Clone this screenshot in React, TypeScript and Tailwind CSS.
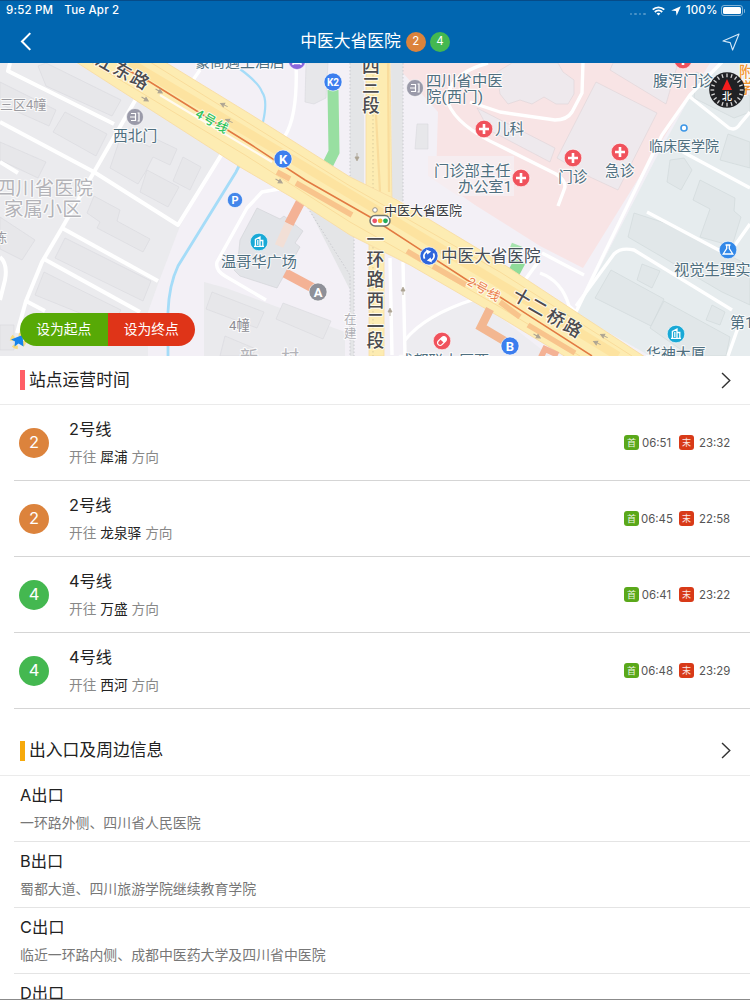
import type { ReactNode } from "react";

type LineTime = { line: number; to: string; first: string; last: string };

const LINE_TIMES: LineTime[] = [
  { line: 2, to: "犀浦", first: "06:51", last: "23:32" },
  { line: 2, to: "龙泉驿", first: "06:45", last: "22:58" },
  { line: 4, to: "万盛", first: "06:41", last: "23:22" },
  { line: 4, to: "西河", first: "06:48", last: "23:29" },
];

const EXITS = [
  { name: "A出口", info: "一环路外侧、四川省人民医院" },
  { name: "B出口", info: "蜀都大道、四川旅游学院继续教育学院" },
  { name: "C出口", info: "临近一环路内侧、成都中医药大学及四川省中医院" },
  { name: "D出口", info: "" },
];

const LINE_BG: Record<number, string> = {
  2: "bg-[#dc833c]",
  4: "bg-[#44b850]",
};

// ── Map data ────────────────────────────────────────────────────────────────

const BUILDINGS = [
  "38,66 46,63 121,100 112,116 46,86",
  "0,82 56,110 49,126 0,104",
  "65,112 107,134 96,156 53,132",
  "0,142 46,162 38,178 0,160",
  "122,133 150,147 156,139 177,149 170,165 153,157 146,171 138,184 110,168",
  "147,170 179,187 168,207 140,192",
  "183,157 201,167 190,190 173,181",
  "94,196 120,210 117,221 150,239 143,252 97,228 100,222 87,213",
  "0,217 35,240 22,260 0,249",
  "65,238 151,281 143,301 55,258",
  "44,272 121,310 112,326 35,295",
  "306,63 328,63 326,98 314,104 305,102",
  "417,124 428,124 428,149 415,149",
  "212,292 264,312 257,328 206,309",
  "225,336 256,349 252,356 220,356",
  "283,303 331,321 323,339 276,319",
  "0,325 14,325 14,350 0,350",
];

const PINK_BUILDINGS = [
  "497,72 512,63 558,63 563,72 574,80 574,94 568,104 556,104 544,97 532,104 520,100 508,104 500,94",
  "596,82 657,113 618,190 590,177 557,158",
  "613,63 678,63 666,104 610,70",
  "477,108 555,148 550,162 489,130",
];

const GREEN_BUILDINGS = [
  "696,72 750,96 750,112 734,118 694,98",
  "670,160 684,158 692,170 681,190 667,182",
  "700,180 735,198 734,211 741,217 732,246 700,237 710,209 693,200",
  "728,134 750,142 750,168 720,160",
  "634,213 665,223 750,266 750,305 722,292 628,237",
  "611,270 664,299 651,326 595,298",
  "642,264 660,271 652,288 637,280",
  "664,301 730,337 726,356 690,356 650,328",
  "712,305 725,312 720,325 706,320",
];

const WHITE_ROADS = [
  "M10 63 L8 71 L114 124",
  "M0 122 L94 172 L178 225 L223 152",
  "M136 99 L94 172 L62 228 L42 262 L26 301 L17 333",
  "M62 228 L158 281",
  "M44 259 L140 312",
  "M26 301 L45 311",
  "M0 162 L18 173",
  "M0 257 Q8 264 5 280 L0 300",
];

const THIN_ROADS = [
  "M296 63 Q298 115 285 136",
  "M200 70 L193 80",
  "M290 187 L262 192 L247 208 L217 262 Q215 270 225 276 L266 300",
  "M488 63 Q445 75 448 103 Q457 126 500 146 L556 174 Q568 182 564 190 L558 206",
  "M470 102 L500 112 L555 120 Q567 120 572 112 L582 93 L583 62",
  "M722 62 L690 95 L662 135 L640 180 L603 256 L576 312 L569 306 Q562 281 540 273",
  "M690 97 L729 128 Q736 131 740 124 L750 112",
  "M683 152 L750 188",
  "M576 306 L614 254 Q621 247 634 250 L732 310",
  "M647 212 L728 255 L750 224",
  "M542 253 L584 275",
  "M538 262 L525 280",
  "M403 262 L405 355",
  "M390 258 L392 355",
  "M405 340 Q425 315 475 299",
  "M740 322 L728 356",
];

// ── Map icons ───────────────────────────────────────────────────────────────

type LabelProps = {
  x: number;
  y: number;
  size: number;
  width?: number;
  rotate?: number;
  fill?: string;
  weight?: number;
  center?: boolean;
  children: string;
};

// y is the visual middle of the glyphs, not the baseline
function Label({ x, y, size, width, rotate = 0, fill = "#4f6f7f", weight = 400, center, children }: LabelProps) {
  return (
    <text
      x={x}
      y={y + size * 0.37}
      fontSize={size}
      fontWeight={weight}
      fill={fill}
      textLength={width}
      textAnchor={center ? "middle" : "start"}
      transform={rotate ? `rotate(${rotate} ${x} ${y})` : undefined}
      stroke="#ffffff"
      strokeWidth={2.2}
      strokeOpacity={0.75}
      strokeLinejoin="round"
      paintOrder="stroke"
    >
      {children}
    </text>
  );
}

function RoadName({ x, y, rotate, children }: { x: number; y: number; rotate?: number; children: string }) {
  return (
    <Label x={x} y={y} size={17.8} rotate={rotate} fill="#4b4b50" weight={500} center>
      {children}
    </Label>
  );
}

function Dot({ x, y, r = 9, fill, children }: { x: number; y: number; r?: number; fill: string; children?: ReactNode }) {
  return (
    <g transform={`translate(${x} ${y})`}>
      <circle r={r} fill={fill} stroke="#fff" strokeWidth={0.6} />
      {children}
    </g>
  );
}

function Letter({ x, y, fill, r, size = 12, children }: { x: number; y: number; fill: string; r?: number; size?: number; children: string }) {
  return (
    <Dot x={x} y={y} r={r} fill={fill}>
      <text y={size * 0.36} fontSize={size} fontWeight={700} fill="#fff" textAnchor="middle">
        {children}
      </text>
    </Dot>
  );
}

function Hospital({ x, y }: { x: number; y: number }) {
  return (
    <Dot x={x} y={y} r={8.8} fill="#f0525c">
      <path d="M-5 0H5M0 -5V5" stroke="#fff" strokeWidth={2.6} />
    </Dot>
  );
}

function Gate({ x, y }: { x: number; y: number }) {
  return (
    <Dot x={x} y={y} r={8.5} fill="#9a9aa9">
      <path d="M-4 -3.5H0.5V3.5H-4M-5 0H0M2.5 -4H4V4H2.5" stroke="#fff" strokeWidth={1.2} fill="none" />
    </Dot>
  );
}

function Building({ x, y }: { x: number; y: number }) {
  return (
    <Dot x={x} y={y} r={8.8} fill="#19a9d6">
      <path d="M-3.6 4V-2.5L1 -5V4M1 -1.5H3.8V4M-5 4.3H5" stroke="#fff" strokeWidth={1.3} fill="none" />
      <path d="M-1.2 -2V3" stroke="#fff" strokeWidth={1.2} />
    </Dot>
  );
}

function RoadArrow({ x, y, rotate }: { x: number; y: number; rotate: number }) {
  return (
    <path
      d="M-4 0H2M0 -2L3.8 0L0 2Z"
      transform={`translate(${x} ${y}) rotate(${rotate})`}
      fill="#ada493"
      stroke="#ada493"
      strokeWidth={0.9}
    />
  );
}

function Compass() {
  return (
    <g transform="translate(727 90)">
      <circle r={17.8} fill="#202124" />
      {Array.from({ length: 20 }, (_, i) => (
        <path key={i} d="M0 -16.5V-12.8" stroke="#d8d8d8" strokeWidth={1.3} transform={`rotate(${i * 18})`} />
      ))}
      <path d="M0 -11L5 0H-5Z" fill="#f41d1d" />
      <text y={10} fontSize={10} fill="#fff" textAnchor="middle" fontWeight={500}>
        北
      </text>
    </g>
  );
}

function StationMap() {
  return (
    <svg viewBox="0 63 750 293" className="block h-full w-full font-['Roboto','Noto_Sans_CJK_SC',sans-serif]">
      {/* land blocks */}
      <rect y={63} width={750} height={293} fill="#f3f0f6" />
      <path d="M0 63H76L223 150L180 226L158 284L148 312V356H0Z" fill="#ebebee" />
      <path d="M204 282L226 288L345 332V356H204Z" fill="#eaeaed" />
      <path d="M402 63H710L583 268L540 246L475 205L436 178L438 112L402 72Z" fill="#f8e4e5" />
      <path d="M428 156H514V196H458L428 176Z" fill="#f6edf0" />
      <path d="M722 63H750V356H650L576 314L655 160L690 97Z" fill="#e6ecee" />
      <path d="M406 341Q430 314 477 299L550 356H404Z" fill="#edecf0" />
      <path d="M257 208L280 219L284 216L303 231L295 243L300 247L277 288L240 276L234 270L238 260L240 240Z" fill="#e2e4e8" stroke="#d2d4d9" strokeWidth={0.7} />

      <g fill="#e7e7ea" stroke="#d9d9dd" strokeWidth={0.6}>
        {BUILDINGS.map((p) => <polygon key={p} points={p} />)}
      </g>
      <g fill="#eee9ed" stroke="#ddd3d7" strokeWidth={0.6}>
        {PINK_BUILDINGS.map((p) => <polygon key={p} points={p} />)}
      </g>
      <g fill="#e1e7e9" stroke="#cfd7d9" strokeWidth={0.6}>
        {GREEN_BUILDINGS.map((p) => <polygon key={p} points={p} />)}
      </g>

      {/* side strips along the ring road */}
      <path d="M350 63H364V186L350 177ZM391 63H403V202L392 197Z" fill="#e4e5e7" />
      <path d="M306 203L354 234V356H350V290Z" fill="#e4e5e7" />
      <path d="M350 63V176M403 63V202M306 205L350 275V356M354 236V356" fill="none" stroke="#c6c6cc" strokeDasharray="1.5 2" strokeWidth={0.9} />

      <g fill="none" stroke="#fff" strokeWidth={4} strokeLinejoin="round">
        {WHITE_ROADS.map((d) => <path key={d} d={d} />)}
      </g>
      <g fill="none" stroke="#fff" strokeWidth={3.4} strokeLinejoin="round">
        {THIN_ROADS.map((d) => <path key={d} d={d} />)}
      </g>

      {/* water */}
      <path d="M240 69Q259 83 262 92Q268 100 263 122" fill="none" stroke="#a5dcf8" strokeWidth={2.2} />
      <path d="M242 160L236 172L178 266Q169 285 168 312V356" fill="none" stroke="#a5dcf8" strokeWidth={2.8} />

      {/* underground passages */}
      <path d="M333 90L334 152L326 168" fill="none" stroke="#98dfa1" strokeWidth={11} />
      <path d="M520 261L511 278" fill="none" stroke="#8fdc99" strokeWidth={12} />
      <path d="M511 245L521 249" fill="none" stroke="#a6e3ae" strokeWidth={5} />
      <path d="M301 201L289 224M285 273L313 288" stroke="#f4b295" strokeWidth={9.5} />
      <path d="M289 224L279 246" stroke="#f2dfd6" strokeWidth={9} />

      {/* ring road */}
      <path d="M366 63H390L392 205L384 250V356H369V235L366 200Z" fill="#fdecb2" stroke="#f8dda2" strokeWidth={0.8} />
      <path d="M388 63L389 192M376 115L380 192" stroke="#f9dc9c" strokeWidth={2.2} />
      <path d="M373 63V356" stroke="#d9cb9b" strokeDasharray="1.5 2.5" />

      {/* main diagonal road */}
      <path
        d="M76 62L165 62L250 114L350 177L397 200L500 262L573 310L645 357H566L500 317L410 265L350 235L293 198L240 167Z"
        fill="#fdecb2"
        stroke="#f8dda4"
        strokeWidth={0.9}
      />
      <path d="M130 63L250 134L350 194L500 284L618 356" fill="none" stroke="#fde3a0" strokeWidth={9} />
      <path d="M150 62L250 124L350 186L500 272L632 356M92 63L245 155L350 222L500 307L580 356" fill="none" stroke="#f9dc9b" strokeWidth={1} />
      <path d="M160 95L272 162" fill="none" stroke="#fffaf0" strokeWidth={2.2} />
      <path d="M277 172L290 179M296 183L352 215M407 251L422 260M433 266L466 285M500 302L520 317M528 325L575 353" stroke="#f8c48c" strokeWidth={5.5} />
      <path d="M490 309L481 327L508 343" fill="none" stroke="#f3b791" strokeWidth={8.5} />
      <path d="M541 357L545 349L558 355" stroke="#f4b295" strokeWidth={6} fill="none" />
      <path d="M120 66L150 82L250 144L305 180L370 217L467 280L500 297L592 356" fill="none" stroke="#e27a42" strokeWidth={1.5} />

      <RoadArrow x={159} y={91} rotate={30} />
      <RoadArrow x={145} y={99} rotate={30} />
      <RoadArrow x={224} y={105} rotate={205} />
      <RoadArrow x={229} y={121} rotate={205} />
      <RoadArrow x={279} y={181} rotate={30} />
      <RoadArrow x={357} y={157} rotate={90} />
      <RoadArrow x={403} y={291} rotate={-90} />
      <RoadArrow x={390} y={312} rotate={-90} />
      <RoadArrow x={537} y={336} rotate={30} />
      <RoadArrow x={604} y={336} rotate={205} />
      <RoadArrow x={597} y={343} rotate={205} />

      {/* area names */}
      <Label x={0} y={104} size={13} fill="#9b9ba1">三区4幢</Label>
      <Label x={-4} y={188} size={19.4} fill="#b3b3b8">四川省医院</Label>
      <Label x={4} y={209} size={19.4} fill="#b3b3b8">家属小区</Label>
      <Label x={-6} y={237} size={13} fill="#9b9ba1">栋</Label>
      <Label x={229} y={325} size={13.2} fill="#8c8c93">4幢</Label>
      <Label x={240} y={357} size={18} fill="#b3b3b8">新</Label>
      <Label x={281} y={357} size={18} fill="#b3b3b8">村</Label>
      <Label x={344} y={319} size={12.5} fill="#b0b0b6">在</Label>
      <Label x={344} y={333} size={12.5} fill="#b0b0b6">建</Label>

      {/* road names */}
      {["四", "三", "段"].map((c, i) => (
        <RoadName key={c} x={371} y={66 + i * 19.5}>{c}</RoadName>
      ))}
      {["一", "环", "路", "西", "二", "段"].map((c, i) => (
        <RoadName key={c} x={375.5} y={239.5 + i * 20.2}>{c}</RoadName>
      ))}
      <RoadName x={105} y={62} rotate={30}>江</RoadName>
      <RoadName x={122.5} y={71} rotate={30}>东</RoadName>
      <RoadName x={140} y={80} rotate={30}>路</RoadName>
      <RoadName x={522} y={297} rotate={30}>十</RoadName>
      <RoadName x={538} y={307} rotate={30}>二</RoadName>
      <RoadName x={556} y={318} rotate={30}>桥</RoadName>
      <RoadName x={573} y={328} rotate={30}>路</RoadName>
      <Label x={212} y={121} size={12.3} width={35} rotate={30} fill="#2fc55c" weight={500} center>4号线</Label>
      <Label x={484} y={289} size={12.3} width={35} rotate={30} fill="#ed7b45" center>2号线</Label>

      {/* places */}
      <Label x={195} y={61} size={15}>豪商遇王酒店</Label>
      <Dot x={297} y={61} r={8.5} fill="#8a67dc">
        <path d="M-4 4V0H4V4M-4 2.5H4" stroke="#fff" strokeWidth={1.4} fill="none" />
      </Dot>
      <Gate x={135} y={117} />
      <Label x={113} y={136} size={14.8}>西北门</Label>
      <Gate x={415} y={88} />
      <Label x={426} y={80} size={15.3}>四川省中医</Label>
      <Label x={426} y={96} size={15.3} width={57}>院(西门)</Label>
      <Hospital x={484} y={129} />
      <Label x={495} y={129} size={14.6}>儿科</Label>
      <Hospital x={521} y={178} />
      <Label x={434} y={170} size={15.3}>门诊部主任</Label>
      <Label x={458} y={186} size={15.3} width={54}>办公室1</Label>
      <Hospital x={573} y={158} />
      <Label x={558} y={177} size={14.8}>门诊</Label>
      <Hospital x={620} y={152} />
      <Label x={605} y={171} size={14.8}>急诊</Label>
      <Hospital x={683} y={60} />
      <Label x={653} y={80} size={15}>腹泻门诊</Label>
      <circle cx={684} cy={128} r={3} fill="#fff" stroke="#3e97e6" strokeWidth={1.6} />
      <Label x={649} y={146} size={14}>临床医学院</Label>
      <Label x={739} y={72} size={14.5} fill="#f39532" weight={500}>附</Label>
      <Label x={739} y={88} size={14.5} fill="#f39532" weight={500}>学</Label>
      <Building x={259} y={242} />
      <Label x={221} y={261} size={15.2}>温哥华广场</Label>
      <Building x={676} y={334} />
      <Label x={646} y={353} size={14.9}>华神大厦</Label>
      <Dot x={728} y={250} r={8.8} fill="#3288e8">
        <path d="M-2.5 -5H2.5M-1.3 -5V-1.5L-4.8 4H4.8L1.3 -1.5V-5" stroke="#fff" strokeWidth={1.3} fill="none" />
      </Dot>
      <Label x={674} y={269} size={15.3}>视觉生理实</Label>
      <Label x={730} y={322} size={15}>第1</Label>
      <Dot x={442} y={341} r={8.8} fill="#f0525c">
        <g transform="rotate(-45)">
          <rect x={-5.2} y={-2.6} width={10.4} height={5.2} rx={2.6} fill="none" stroke="#fff" strokeWidth={1.2} />
          <path d="M0 -2.6H2.6A2.6 2.6 0 0 1 2.6 2.6H0Z" fill="#fff" />
        </g>
      </Dot>
      <Label x={398} y={360} size={15.2}>成都联大厦西</Label>

      {/* exits and the station itself */}
      <Letter x={283} y={159} fill="#3c7eee" size={13}>K</Letter>
      <Letter x={333} y={82} fill="#3c7eee" size={10}>K2</Letter>
      <Letter x={318} y={292} fill="#8e9098" size={13}>A</Letter>
      <Letter x={510} y={346} fill="#3c7eee" size={13}>B</Letter>
      <Letter x={235} y={200} r={7.6} fill="#4386ea" size={11}>P</Letter>
      <Dot x={429} y={256} r={9} fill="#2f66dc">
        <path d="M-4.4 2.6A5 5 0 0 1 -1.5 -4.7M4.4 -2.6A5 5 0 0 1 1.5 4.7" stroke="#fff" strokeWidth={1.7} fill="none" />
        <path d="M-3 -6.5L2.2 -4.4L-1.6 -1.4ZM3 6.5L-2.2 4.4L1.6 1.4Z" fill="#fff" />
      </Dot>
      <Label x={441} y={256} size={16.6} fill="#454d58">中医大省医院</Label>
      <circle cx={375} cy={210} r={2.3} fill="#fff" stroke="#9b938a" strokeWidth={1} />
      <rect x={370} y={215.5} width={20} height={10.5} rx={5.2} fill="#fff" stroke="#6f756d" strokeWidth={1.5} />
      <circle cx={374.7} cy={220.8} r={2.4} fill="#ee5468" />
      <circle cx={380.1} cy={220.8} r={2.4} fill="#f2b632" />
      <circle cx={385.5} cy={220.8} r={2.4} fill="#22aa58" />
      <Label x={384} y={210} size={13} fill="#33363b">中医大省医院</Label>

      {/* user position */}
      <g transform="translate(18 341)">
        <circle r={6.5} fill="none" stroke="#f9dc7c" strokeWidth={3.5} strokeDasharray="5 5.2" />
        <path d="M4.5 -6L5.5 5.5L0.5 2.5L-3.5 5.5L-3 0.5L-7 -1.5Z" fill="#1784ec" />
      </g>

      <Compass />
    </svg>
  );
}

// ── Page parts ──────────────────────────────────────────────────────────────

function StatusBar() {
  return (
    <div className="flex h-5 items-center justify-between border-t border-[#064b88] pr-[5px] pl-[6px] text-[11.5px] font-medium tracking-[0.2px]">
      <div className="flex gap-[11px]">
        <span>9:52 PM</span>
        <span>Tue Apr 2</span>
      </div>
      <div className="flex items-center">
        <span className="mr-[6px] flex gap-[2px] pt-[7px]">
          {[0, 1, 2, 3].map((i) => (
            <i key={i} className="h-[2px] w-[2.5px] rounded-full bg-white/30" />
          ))}
        </span>
        <svg viewBox="0 0 14 10" className="mr-[6px] h-[10px] w-[13px]" fill="none" stroke="#fff" strokeWidth={2}>
          <path d="M0.8 3.6A9 9 0 0 1 13.2 3.6M3 6.1A5.8 5.8 0 0 1 11 6.1" />
          <path d="M7 9.8L4.9 7.8A3 3 0 0 1 9.1 7.8Z" fill="#fff" stroke="none" />
        </svg>
        <svg viewBox="0 0 10 10" className="mr-[5px] h-[10px] w-[10px]">
          <path d="M9.8 0.2L5.6 9.8L4.9 5.1L0.2 4.4Z" fill="#fff" />
        </svg>
        <span>100%</span>
        <span className="ml-[3px] h-[11px] w-[22px] rounded-[3px] border border-white/50 p-px">
          <i className="block h-full w-full rounded-[1.5px] bg-white" />
        </span>
        <i className="ml-px h-1 w-[1.5px] rounded-r bg-white/50" />
      </div>
    </div>
  );
}

function NavBar() {
  return (
    <div className="flex h-[43px] items-center justify-between pr-[10px] pl-[20px]">
      <svg viewBox="0 0 12 20" className="h-[19px] w-[12px]" fill="none" stroke="#fff" strokeWidth={2.2}>
        <path d="M10.5 1.2L1.8 10L10.5 18.8" />
      </svg>
      <div className="flex items-center pr-[4px]">
        <h1 className="text-[16.8px] leading-none">中医大省医院</h1>
        <div className="ml-[5px] flex gap-[4px]">
          {[2, 4].map((n) => (
            <span key={n} className={`flex size-5 items-center justify-center rounded-full text-[11.5px] ${LINE_BG[n]}`}>
              {n}
            </span>
          ))}
        </div>
      </div>
      <svg viewBox="0 0 18 18" className="size-[18px]" fill="none" stroke="#d5e8f8" strokeWidth={1.1} strokeLinejoin="round">
        <path d="M17 1L10.6 17L8.2 9.6L1 8Z" />
      </svg>
    </div>
  );
}

function SectionHeader({ title, bar, className }: { title: string; bar: string; className: string }) {
  return (
    <div className={`flex items-center border-b border-[#ebebeb] pr-[19px] pl-5 ${className}`}>
      <i className={`h-5 w-[5px] ${bar}`} />
      <h2 className="ml-[4px] flex-1 text-[16.8px] leading-none text-[#222]">{title}</h2>
      <svg viewBox="0 0 10 18" className="h-[17px] w-[10px]" fill="none" stroke="#333" strokeWidth={1.5}>
        <path d="M0.8 1L9 9L0.8 17" />
      </svg>
    </div>
  );
}

function TimeTag({ label, bg }: { label: string; bg: string }) {
  return (
    <span className={`flex size-[15px] items-center justify-center rounded-[3px] text-[9px] leading-none text-white/90 ${bg}`}>
      {label}
    </span>
  );
}

function LineRow({ item }: { item: LineTime }) {
  return (
    <li className="ml-[14px] flex h-[76px] items-center border-b border-[#d5d5d5] pr-[20px] pl-[5px]">
      <span className={`flex size-[30px] items-center justify-center rounded-full text-[16.5px] text-white ${LINE_BG[item.line]}`}>
        {item.line}
      </span>
      <div className="ml-5 flex-1">
        <p className="text-[16.3px] leading-[28px] text-[#222]">{item.line}号线</p>
        <p className="text-[13.7px] leading-[28px] text-[#888]">
          开往 <span className="text-[#222]">{item.to}</span> 方向
        </p>
      </div>
      <div className="flex items-center text-[11.4px] leading-none text-[#555]">
        <TimeTag label="首" bg="bg-[#5aa81a]" />
        <span className="ml-[2px] w-[31px] pt-[2px] text-center">{item.first}</span>
        <span className="ml-[7px]">
          <TimeTag label="末" bg="bg-[#d83a18]" />
        </span>
        <span className="ml-[5px] w-[31px] pt-[2px] text-center">{item.last}</span>
      </div>
    </li>
  );
}

export default function App() {
  return (
    <div className="flex h-[1000px] w-[750px] flex-col overflow-hidden border-b border-[#8b8b8b] bg-white font-['Inter','Noto_Sans_CJK_SC',sans-serif]">
      <header className="shrink-0 bg-[#0166b0] text-white">
        <StatusBar />
        <NavBar />
      </header>

      <section className="relative h-[293px] shrink-0 overflow-hidden">
        <StationMap />
        <div className="absolute bottom-[10px] left-5 flex h-[33px] w-[175px] overflow-hidden rounded-full text-[13.8px] text-white">
          <button className="flex-1 bg-[#57a906]">设为起点</button>
          <button className="flex-1 bg-[#df3418]">设为终点</button>
        </div>
      </section>

      <section className="shrink-0">
        <SectionHeader title="站点运营时间" bar="bg-[#ff5e66]" className="h-[49px]" />
        <ul>
          {LINE_TIMES.map((item) => (
            <LineRow key={item.line + item.to} item={item} />
          ))}
        </ul>
      </section>

      <section className="shrink-0 pt-[17px]">
        <SectionHeader title="出入口及周边信息" bar="bg-[#f6a90b]" className="h-[50px]" />
        <ul>
          {EXITS.map((exit) => (
            <li key={exit.name} className="ml-[14px] h-[66px] border-b border-[#e4e4e4] pt-[5px] pl-[6px]">
              <p className="text-[16.3px] leading-[28px] text-[#222]">{exit.name}</p>
              <p className="text-[13.9px] leading-[28px] text-[#777]">{exit.info}</p>
            </li>
          ))}
        </ul>
      </section>
    </div>
  );
}
